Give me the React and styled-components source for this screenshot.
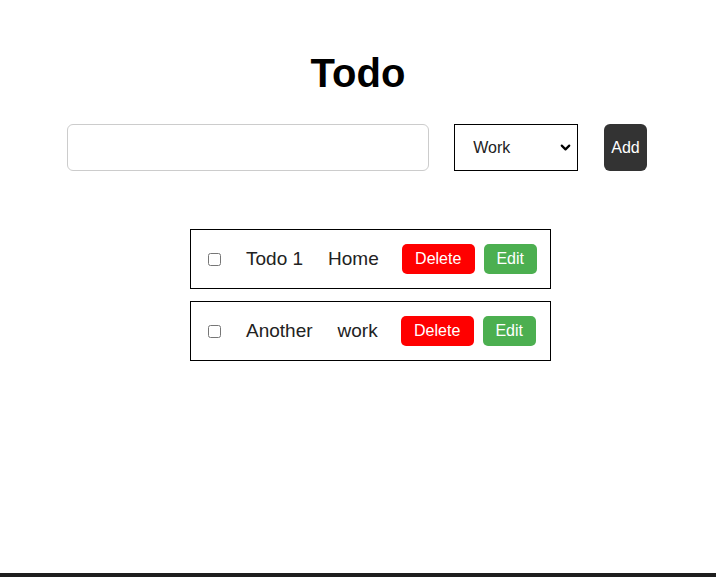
import React, { useState } from "react";
import styled, { createGlobalStyle } from "styled-components";
import { ChevronDown } from "lucide-react";

const GlobalStyle = createGlobalStyle`
  html, body {
    margin: 0;
    padding: 0;
    background: #ffffff;
    font-family: "Liberation Sans", Arial, sans-serif;
  }
`;

function App() {
  const [todos] = useState([
    { id: 1, text: "Todo 1", category: "Home" },
    { id: 2, text: "Another", category: "work" },
  ]);

  return (
    <Page>
      <GlobalStyle />
      <Main>
        <Title>Todo</Title>
        <Form>
          <TextInput type="text" />
          <SelectWrap>
            <Select defaultValue="Work">
              <option>Work</option>
              <option>Home</option>
            </Select>
            <Chevron>
              <ChevronDown size={15} strokeWidth={3.5} />
            </Chevron>
          </SelectWrap>
          <AddButton>Add</AddButton>
        </Form>

        <List>
          {todos.map((todo) => (
            <Item key={todo.id}>
              <Check type="checkbox" />
              <Label>{todo.text}</Label>
              <Category>{todo.category}</Category>
              <Actions>
                <ActionButton $color="#ff0000" $w={73}>
                  Delete
                </ActionButton>
                <ActionButton $color="#4caf50" $w={53}>
                  Edit
                </ActionButton>
              </Actions>
            </Item>
          ))}
        </List>
      </Main>
      <Footer />
    </Page>
  );
}

export default App;

const Page = styled.div`
  min-height: 100vh;
  display: flex;
  flex-direction: column;
`;

const Main = styled.div`
  flex: 1;
  display: flex;
  flex-direction: column;
  align-items: center;
  padding-top: 50px;
`;

const Title = styled.h1`
  margin: 0;
  font-size: 40px;
  line-height: 46px;
  font-weight: 700;
  color: #000;
`;

const Form = styled.div`
  display: flex;
  align-items: center;
  margin-top: 28px;
  margin-left: -2px;
`;

const TextInput = styled.input`
  box-sizing: border-box;
  width: 362px;
  height: 47px;
  border: 1px solid #cccccc;
  border-radius: 6px;
  padding: 0 10px;
  font-size: 16px;
  font-family: inherit;
  outline: none;
`;

const SelectWrap = styled.div`
  position: relative;
  margin-left: 25px;
`;

const Select = styled.select`
  box-sizing: border-box;
  appearance: none;
  -webkit-appearance: none;
  width: 124px;
  height: 47px;
  border: 1px solid #000;
  border-radius: 0;
  background: #fff;
  padding: 0 0 0 18px;
  font-size: 16px;
  font-family: inherit;
  color: #222;
  outline: none;
`;

const Chevron = styled.span`
  position: absolute;
  right: 5px;
  top: 16px;
  display: flex;
  color: #000;
  pointer-events: none;
`;

const AddButton = styled.button`
  box-sizing: border-box;
  height: 47px;
  margin-left: 26px;
  padding: 0 7px;
  border: none;
  border-radius: 6px;
  background: #333333;
  color: #fff;
  font-size: 16px;
  font-family: inherit;
`;

const List = styled.div`
  display: flex;
  flex-direction: column;
  gap: 12px;
  margin-top: 58px;
  margin-left: 25px;
`;

const Item = styled.div`
  box-sizing: border-box;
  width: 361px;
  height: 60px;
  border: 1px solid #000;
  display: flex;
  align-items: center;
  padding: 0 13px;
  white-space: nowrap;

  & > * {
    flex-shrink: 0;
  }
`;

const Check = styled.input`
  width: 13px;
  height: 13px;
  margin: 0 0 0 4px;
`;

const Label = styled.span`
  margin-left: 25px;
  font-size: 19px;
  color: #222;
`;

const Category = styled.span`
  margin-left: 25px;
  font-size: 19px;
  color: #222;
`;

const Actions = styled.div`
  margin-left: 23px;
  display: flex;
  gap: 9px;
`;

const ActionButton = styled.button`
  box-sizing: border-box;
  width: ${(p) => p.$w}px;
  height: 30px;
  padding: 0;
  border: none;
  border-radius: 5px;
  background: ${(p) => p.$color};
  color: #fff;
  font-size: 16px;
  font-family: inherit;
`;

const Footer = styled.div`
  height: 4px;
  background: #1e1e1e;
`;
